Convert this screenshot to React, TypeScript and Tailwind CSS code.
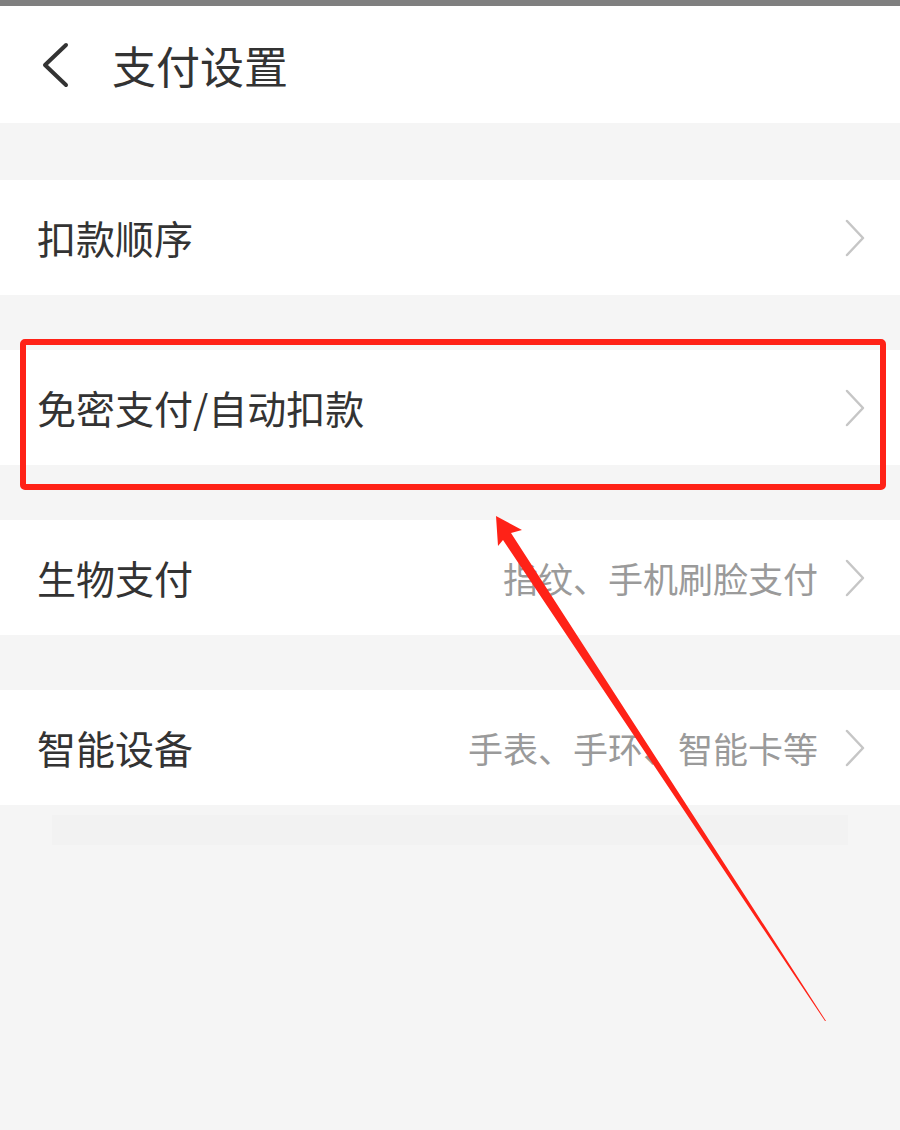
import React from 'react';

const font = { fontFamily: '"Noto Sans CJK SC", "Noto Sans", sans-serif' };

interface RowProps {
  label: string;
  hint?: string;
}

const Chevron: React.FC = () => (
  <svg width="22" height="40" viewBox="0 0 22 40" className="shrink-0">
    <path d="M3 3 L19 20 L3 37" fill="none" stroke="#c6c6c6" strokeWidth="2.5" strokeLinecap="round" strokeLinejoin="round" />
  </svg>
);

const Row: React.FC<RowProps> = ({ label, hint }) => (
  <div className="h-[115px] bg-white flex items-center pl-[37px] pr-[34px]">
    <span className="text-[39px] text-[#333333] leading-none flex-1">{label}</span>
    {hint && <span className="text-[35px] text-[#9a9a9a] leading-none mr-[26px]">{hint}</span>}
    {!hint && <span className="mr-[26px]" />}
    <Chevron />
  </div>
);

export default function App() {
  return (
    <div className="relative w-[900px] h-[1130px] bg-[#f5f5f5] overflow-hidden" style={font}>
      <div className="h-[6px] bg-[#7f7f7f]" />
      <div className="h-[117px] bg-white flex items-center pl-[40px]">
        <svg width="30" height="46" viewBox="0 0 30 46" className="mr-[42px]">
          <path d="M26 3 L5 23 L26 43" fill="none" stroke="#333333" strokeWidth="4" strokeLinecap="round" strokeLinejoin="round" />
        </svg>
        <span className="text-[44px] text-[#333333] leading-none">支付设置</span>
      </div>

      <div className="flex flex-col gap-[55px] pt-[57px]">
        <Row label="扣款顺序" />
        <Row label="免密支付/自动扣款" />
        <Row label="生物支付" hint="指纹、手机刷脸支付" />
        <Row label="智能设备" hint="手表、手环、智能卡等" />
      </div>
      <div className="mx-[52px] mt-[10px] h-[30px] bg-[#f2f2f2]" />

      {/* annotation: highlight box */}
      <div className="absolute left-[20px] top-[339px] w-[866px] h-[151px] border-[6px] border-[#ff2217] rounded-[5px]" />

      {/* annotation: arrow */}
      <svg className="absolute left-0 top-0" width="900" height="1130" viewBox="0 0 900 1130">
        <polygon points="496,516 522,530 511,533 826,1021 825,1021 503,540 498,546" fill="#ff2217" />
      </svg>
    </div>
  );
}
